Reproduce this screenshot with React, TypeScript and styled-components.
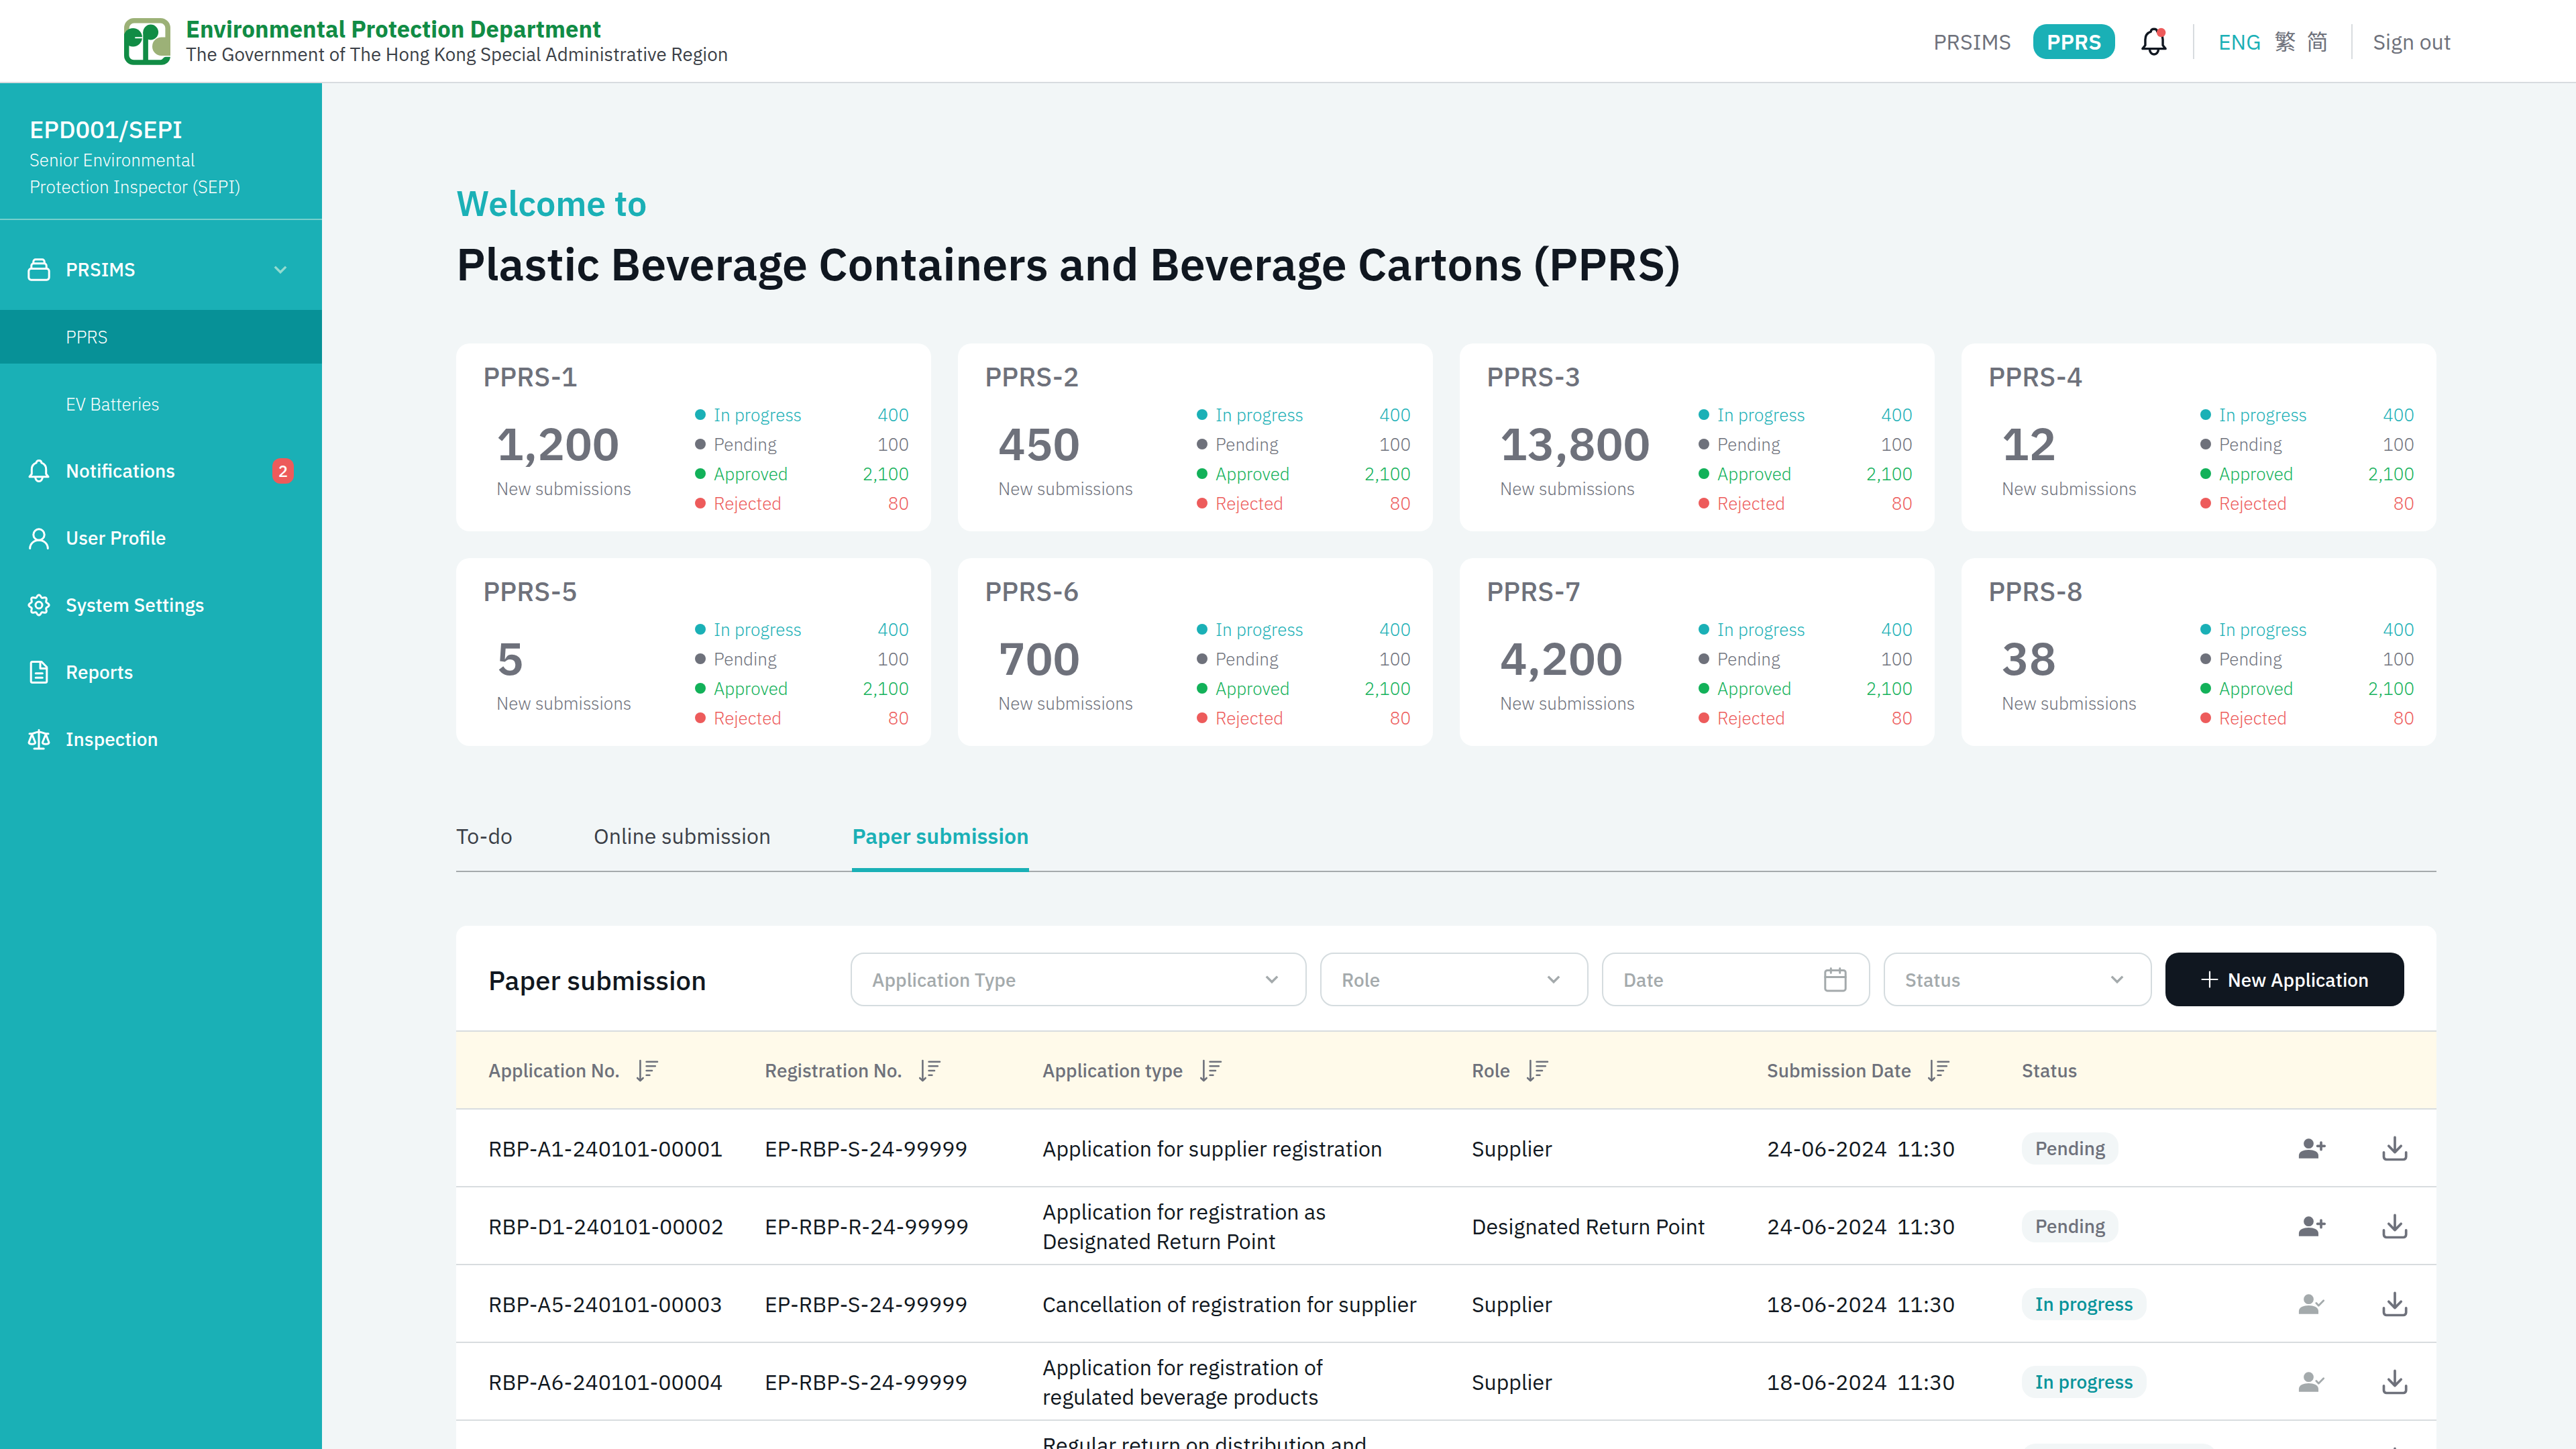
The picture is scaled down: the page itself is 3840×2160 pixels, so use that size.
import React from "react";
import styled, { createGlobalStyle } from "styled-components";

const color = {
  teal: "#1ab0b6",
  tealDark: "#079197",
  tealText: "#06939a",
  ink: "#101720",
  slate: "#3b3f47",
  grey: "#6e717b",
  muted: "#a4aaac",
  line: "#d8dcdf",
  field: "#d5dcdf",
  page: "#f2f6f7",
  cream: "#fffaea",
  green: "#12b159",
  red: "#ed5b5b",
  brand: "#118c45",
  olive: "#9cb177",
};

const GlobalStyle = createGlobalStyle`
  *, *::before, *::after { box-sizing: border-box; }
  body {
    margin: 0;
    background: ${color.page};
    font-family: "IBM Plex Sans", Roboto, "Noto Sans CJK TC", "Noto Sans CJK SC", sans-serif;
    color: ${color.ink};
  }
  h1, h2, h3, p, ul { margin: 0; padding: 0; list-style: none; }
`;

/* ---------- shell ---------- */

const Page = styled.div`
  display: flex;
  flex-direction: column;
  width: 3840px;
  height: 2160px;
  overflow: hidden;
`;

const Header = styled.header`
  flex: none;
  display: flex;
  align-items: center;
  justify-content: space-between;
  height: 124px;
  padding: 0 186px 0 185px;
  background: #fff;
  box-shadow: inset 0 -2px 0 ${color.line};
`;

const Brand = styled.div`
  display: flex;
  align-items: center;
  gap: 23px;
`;

const BrandName = styled.div`
  font-size: 34.6px;
  font-weight: 700;
  line-height: 38px;
  color: ${color.brand};
`;

const BrandSub = styled.div`
  font-size: 27.7px;
  line-height: 36px;
  color: ${color.slate};
`;

const TopNav = styled.nav`
  display: flex;
  align-items: center;
  font-size: 32px;
  line-height: 52px;
  color: ${color.grey};
`;

const Pill = styled.span`
  margin: 0 36px 0 33px;
  padding: 0 20px;
  border-radius: 20px;
  background: ${color.teal};
  color: #fff;
  font-weight: 600;
`;

const Divider = styled.span<{ $before: number; $after: number }>`
  width: 2px;
  height: 52px;
  margin: 0 ${(p) => p.$after}px 0 ${(p) => p.$before}px;
  background: ${color.line};
`;

const Languages = styled.div`
  display: flex;
  gap: 16px;
`;

const Lang = styled.span<{ $active?: boolean; $cjk?: "TC" | "SC" }>`
  color: ${(p) => (p.$active ? color.teal : color.grey)};
  ${(p) => p.$active && "margin-right: 4px;"}
  ${(p) => p.$cjk && `font-family: "Noto Sans CJK ${p.$cjk}", sans-serif; margin-top: -2px;`}
`;

const Body = styled.div`
  flex: 1;
  display: flex;
  min-height: 0;
`;

/* ---------- sidebar ---------- */

const Sidebar = styled.aside`
  flex: none;
  width: 480px;
  background: ${color.teal};
  color: #fff;
`;

const Profile = styled.div`
  height: 204px;
  padding: 44px 44px 0;
  border-bottom: 2px solid #76cfcd;
`;

const ProfileName = styled.div`
  font-size: 36px;
  font-weight: 500;
  line-height: 50px;
`;

const ProfileRole = styled.div`
  width: 340px;
  font-size: 26px;
  font-weight: 300;
  line-height: 40px;
`;

const Nav = styled.nav`
  display: flex;
  flex-direction: column;
  gap: 20px;
  padding-top: 34px;
`;

const NavItem = styled.div`
  display: flex;
  align-items: center;
  gap: 20px;
  height: 80px;
  padding: 0 42px 0 40px;
  font-size: 28px;
  font-weight: 500;
`;

const NavLabel = styled.span`
  flex: 1;
  padding: 0 0 2px 2px;
`;

const SubItem = styled.div<{ $active?: boolean }>`
  height: 80px;
  padding-left: 98px;
  background: ${(p) => (p.$active ? color.tealDark : "transparent")};
  font-size: 26px;
  font-weight: 300;
  line-height: 80px;
`;

const Count = styled.span`
  width: 32px;
  height: 38px;
  border-radius: 12px;
  background: ${color.red};
  font-size: 24px;
  line-height: 38px;
  text-align: center;
`;

/* ---------- main ---------- */

const Main = styled.main`
  width: 3360px;
  padding: 144px 208px 0 200px;
`;

const Welcome = styled.h2`
  font-size: 52px;
  font-weight: 600;
  line-height: 69px;
  color: ${color.teal};
`;

const Title = styled.h1`
  margin-top: 11px;
  font-size: 68px;
  font-weight: 600;
  line-height: 89px;
`;

const Cards = styled.section`
  display: grid;
  grid-template-columns: repeat(4, 708px);
  grid-auto-rows: 280px;
  gap: 40px;
  margin-top: 75px;
`;

const Card = styled.article`
  padding: 23px 33px 0 40px;
  border-radius: 20px;
  background: #fff;
  color: ${color.grey};
`;

const CardTitle = styled.h3`
  font-size: 40px;
  font-weight: 500;
  line-height: 52px;
`;

const CardBody = styled.div`
  display: flex;
  justify-content: space-between;
  margin-top: 9px;
  padding-left: 20px;
`;

const Total = styled.div`
  padding-top: 22px;
  font-size: 68px;
  font-weight: 600;
  line-height: 85px;
`;

const TotalLabel = styled.div`
  margin-top: 5px;
  font-size: 26px;
  font-weight: 300;
  line-height: 40px;
`;

const Stats = styled.ul`
  width: 319px;
`;

const Stat = styled.li<{ $tone: string }>`
  display: flex;
  align-items: center;
  height: 44px;
  font-size: 26px;
  font-weight: 300;
  color: ${(p) => p.$tone};
`;

const Dot = styled.span`
  width: 16px;
  height: 16px;
  margin-right: 12px;
  border-radius: 50%;
  background: currentColor;
`;

const StatValue = styled.span`
  margin-left: auto;
`;

const Tabs = styled.div`
  display: flex;
  margin-top: 112px;
  box-shadow: inset 0 -2px 0 #a5aaac;
`;

const Tab = styled.div<{ $active?: boolean }>`
  margin-right: 121px;
  padding-bottom: 26px;
  border-bottom: 6px solid ${(p) => (p.$active ? color.teal : "transparent")};
  font-size: 32px;
  font-weight: ${(p) => (p.$active ? 600 : 400)};
  line-height: 44px;
  color: ${(p) => (p.$active ? color.teal : color.slate)};
`;

/* ---------- table panel ---------- */

const Panel = styled.section`
  margin-top: 80px;
  border-radius: 16px 16px 0 0;
  background: #fff;
`;

const Toolbar = styled.div`
  display: flex;
  gap: 20px;
  height: 158px;
  padding: 40px 48px 0;
  box-shadow: inset 0 -2px 0 ${color.line};
`;

const PanelTitle = styled.h3`
  width: 520px;
  font-size: 40px;
  font-weight: 500;
  line-height: 82px;
`;

const Select = styled.div<{ $width: number }>`
  display: flex;
  align-items: center;
  justify-content: space-between;
  width: ${(p) => p.$width}px;
  height: 80px;
  padding: 0 30px;
  border: 2px solid ${color.field};
  border-radius: 20px;
  font-size: 28px;
  font-weight: 500;
  line-height: 35px;
  color: ${color.muted};
`;

const NewButton = styled.button`
  display: flex;
  align-items: center;
  justify-content: center;
  gap: 14px;
  width: 356px;
  height: 80px;
  padding: 0;
  border: 0;
  border-radius: 20px;
  background: ${color.ink};
  color: #fff;
  font: inherit;
  font-size: 28px;
  font-weight: 500;
  line-height: 35px;
`;

const Row = styled.div<{ $head?: boolean }>`
  display: grid;
  grid-template-columns: 412px 414px 640px 440px 380px 1fr;
  align-items: center;
  height: 116px;
  padding: 0 40px 0 48px;
  background: ${(p) => (p.$head ? color.cream : "#fff")};
  box-shadow: inset 0 -2px 0 ${color.line};
  font-size: ${(p) => (p.$head ? 28 : 32)}px;
  font-weight: ${(p) => (p.$head ? 500 : 400)};
  line-height: 44px;
  color: ${(p) => (p.$head ? color.grey : color.ink)};
`;

const HeadCell = styled.div`
  display: flex;
  align-items: center;
  gap: 21px;
`;

const Cell = styled.div`
  white-space: pre;
`;

const Badge = styled.span<{ $tone: string; $min?: number }>`
  display: inline-block;
  min-width: ${(p) => p.$min ?? 0}px;
  padding: 0 20px;
  border-radius: 20px;
  background: ${color.page};
  color: ${(p) => p.$tone};
  font-size: 28px;
  font-weight: 500;
  line-height: 48px;
  vertical-align: middle;
`;

const StatusCell = styled.div`
  display: flex;
  align-items: center;
  justify-content: space-between;
`;

const Actions = styled.div`
  display: flex;
  justify-content: flex-end;
  gap: 79px;
`;

/* ---------- icons ---------- */

const Icon = styled.svg<{ $size: number; $stroke?: number }>`
  flex: none;
  display: block;
  width: ${(p) => p.$size}px;
  height: ${(p) => p.$size}px;
  fill: none;
  stroke: currentColor;
  stroke-width: ${(p) => p.$stroke ?? 3};
  stroke-linecap: round;
  stroke-linejoin: round;
  overflow: visible;
`;

const MiterPath = styled.path`
  stroke-linecap: butt;
  stroke-linejoin: miter;
`;

const Logo = () => (
  <svg width="69" height="70" viewBox="0 0 69 70" fill="none">
    <path d="M3.8 24V14.8a11 11 0 0 1 11-11h39.4a11 11 0 0 1 11 11V56" stroke={color.olive} strokeWidth="7.6" />
    <path d="M69 28.6H55.7a13.7 13.7 0 0 0 0 27.4H69z" fill={color.olive} />
    <path
      d="M0 26H7.4V55.2A7 7 0 0 0 14.4 62.2H54.5C57.8 62.2 58.2 58 62 57.8H69C68.2 65 62.8 69.8 55.5 69.8H14A14 14 0 0 1 0 55.8Z"
      fill={color.brand}
    />
    <circle cx="13.3" cy="28.7" r="13.7" fill={color.brand} />
    <path d="M0 26V24L4 18V30Z" fill={color.brand} />
    <path d="M16.3 29.2H28" stroke="#fff" strokeWidth="2" />
    <circle cx="39.7" cy="21" r="11.4" fill={color.brand} />
    <path d="M28.3 21h7.6v46h-7.6z" fill={color.brand} />
  </svg>
);

const BellPaths = () => (
  <>
    <path d="M4 26.7H32L28.7 22.5V15.5C28.7 10.5 26 7.3 21.8 5.8C21.8 3.6 20.2 2.6 18 2.6S14.2 3.6 14.2 5.8C10 7.3 7.3 10.5 7.3 15.5V22.5Z" />
    <path d="M12.7 27.5a5.3 6 0 0 0 10.6 0" />
  </>
);

const AlertBell = () => (
  <Icon $size={44} $stroke={2.8} viewBox="0 0 36 36" color={color.ink}>
    <BellPaths />
    <circle cx="26.7" cy="7" r="5.5" fill={color.red} stroke="none" />
  </Icon>
);

const gearPath =
  Array.from({ length: 144 }, (_, i) => {
    const a = (i / 144) * Math.PI * 2;
    const r = 13.4 + 1.7 * Math.cos(8 * a);
    return `${i ? "L" : "M"}${(18 + r * Math.cos(a)).toFixed(2)} ${(18 + r * Math.sin(a)).toFixed(2)}`;
  }).join("") + "Z";

const navIcons: Record<string, React.ReactNode> = {
  box: (
    <>
      <rect x="2.8" y="16.5" width="30.4" height="16.7" rx="3.6" />
      <path d="M6.8 16V12a3.2 3.2 0 0 1 3.2-3.2H26a3.2 3.2 0 0 1 3.2 3.2V16" />
      <path d="M9.8 8.5V6a3.2 3.2 0 0 1 3.2-3.2H23A3.2 3.2 0 0 1 26.2 6V8.5" />
    </>
  ),
  bell: <BellPaths />,
  user: (
    <>
      <circle cx="18" cy="13" r="8.2" />
      <path d="M4.7 33.5C4.7 26.6 10.5 21.2 18 21.2S31.3 26.6 31.3 33.5" />
    </>
  ),
  gear: (
    <>
      <path d={gearPath} />
      <circle cx="18" cy="18" r="5" />
    </>
  ),
  file: (
    <>
      <path d="M6.2 4.5a2 2 0 0 1 2-2H22L29.8 10.5V31.5a2 2 0 0 1-2 2H8.2a2 2 0 0 1-2-2Z" />
      <path d="M20 2.5V12.5H29.8M13.2 19.7H23.3M13.2 26.3H23.3" />
    </>
  ),
  scale: (
    <>
      <path d="M18 4.2V32M11 32H25.2M4 9.7H7.5C11 9.7 13.5 6.9 18 6.9S25 9.7 28.5 9.7H32" />
      <path d="M7.7 10.5L3 22.8C3 26 12.6 26 12.6 22.8ZM28.3 10.5L23.4 22.8C23.4 26 33 26 33 22.8Z" />
    </>
  ),
};

const Chevron = ({ tint }: { tint?: string }) => (
  <Icon $size={40} $stroke={3.4} viewBox="0 0 40 40" color={tint}>
    <MiterPath d="M11.8 15.6L20 23.8L28.2 15.6" />
  </Icon>
);

const Calendar = () => (
  <Icon $size={40} viewBox="0 0 40 40">
    <rect x="4.8" y="6.4" width="30.4" height="30.6" rx="3.2" />
    <path d="M4.8 16.4H35.2M13.3 3.5V10.2M26.7 3.5V10.2" />
  </Icon>
);

const Plus = () => (
  <Icon $size={26} $stroke={2.2} viewBox="0 0 26 26">
    <path d="M13 1.5V24.5M1.5 13H24.5" />
  </Icon>
);

const Sort = () => (
  <Icon $size={40} $stroke={2.6} viewBox="0 0 40 40">
    <path d="M9.4 5V35M5.2 31L9.4 35.2L13.6 31M18.6 6.8H35M18.6 13.3H31.8M18.6 20H27M18.6 26.7H23.4" />
  </Icon>
);

const Person = () => (
  <>
    <circle cx="16.5" cy="14.7" r="7.4" fill="currentColor" stroke="none" />
    <path d="M1.9 36.7V32.5C1.9 26.8 9 24 16.5 24S31 26.8 31 32.5V36.7Z" fill="currentColor" stroke="none" />
  </>
);

const Assign = () => (
  <Icon $size={44} $stroke={3.7} viewBox="0 0 44 44" color={color.grey}>
    <Person />
    <path d="M29.6 18.3H40.2M35 13V23.7" />
  </Icon>
);

const Assigned = () => (
  <Icon $size={44} $stroke={2.8} viewBox="0 0 44 44" color={color.muted}>
    <Person />
    <path d="M27.8 20.6L31.3 24.2L38.7 16.8" />
  </Icon>
);

const Download = () => (
  <Icon $size={44} $stroke={3.7} viewBox="0 0 44 44" color={color.grey}>
    <path d="M22 5.4V27.6M12.8 18.2L22 27.6L31.2 18.2" />
    <path d="M5.5 27.8V34.5a4 4 0 0 0 4 4H34.7a4 4 0 0 0 4-4V27.8" />
  </Icon>
);

/* ---------- data ---------- */

const cards = [
  ["PPRS-1", "1,200"],
  ["PPRS-2", "450"],
  ["PPRS-3", "13,800"],
  ["PPRS-4", "12"],
  ["PPRS-5", "5"],
  ["PPRS-6", "700"],
  ["PPRS-7", "4,200"],
  ["PPRS-8", "38"],
];

const stats = [
  ["In progress", "400", color.teal],
  ["Pending", "100", color.grey],
  ["Approved", "2,100", color.green],
  ["Rejected", "80", color.red],
];

const columns = ["Application No.", "Registration No.", "Application type", "Role", "Submission Date"];

const rows = [
  { no: "RBP-A1-240101-00001", reg: "EP-RBP-S-24-99999", type: "Application for supplier registration", role: "Supplier", date: "24-06-2024  11:30", status: "Pending" },
  { no: "RBP-D1-240101-00002", reg: "EP-RBP-R-24-99999", type: "Application for registration as\nDesignated Return Point", role: "Designated Return Point", date: "24-06-2024  11:30", status: "Pending" },
  { no: "RBP-A5-240101-00003", reg: "EP-RBP-S-24-99999", type: "Cancellation of registration for supplier", role: "Supplier", date: "18-06-2024  11:30", status: "In progress" },
  { no: "RBP-A6-240101-00004", reg: "EP-RBP-S-24-99999", type: "Application for registration of\nregulated beverage products", role: "Supplier", date: "18-06-2024  11:30", status: "In progress" },
  { no: "", reg: "", type: "Regular return on distribution and\n\u00a0", role: "", date: "", status: "" },
];

const navItems = [
  ["bell", "Notifications"],
  ["user", "User Profile"],
  ["gear", "System Settings"],
  ["file", "Reports"],
  ["scale", "Inspection"],
];

export default function App() {
  return (
    <Page>
      <GlobalStyle />
      <Header>
        <Brand>
          <Logo />
          <div>
            <BrandName>Environmental Protection Department</BrandName>
            <BrandSub>The Government of The Hong Kong Special Administrative Region</BrandSub>
          </div>
        </Brand>
        <TopNav>
          <span>PRSIMS</span>
          <Pill>PPRS</Pill>
          <AlertBell />
          <Divider $before={36} $after={36} />
          <Languages>
            <Lang $active>ENG</Lang>
            <Lang $cjk="TC">繁</Lang>
            <Lang $cjk="SC">简</Lang>
          </Languages>
          <Divider $before={35} $after={30} />
          <span>Sign out</span>
        </TopNav>
      </Header>
      <Body>
        <Sidebar>
          <Profile>
            <ProfileName>EPD001/SEPI</ProfileName>
            <ProfileRole>Senior Environmental Protection Inspector (SEPI)</ProfileRole>
          </Profile>
          <Nav>
            <NavItem>
              <Icon $size={36} viewBox="0 0 36 36">{navIcons.box}</Icon>
              <NavLabel>PRSIMS</NavLabel>
              <Chevron tint="#93dbd0" />
            </NavItem>
            <SubItem $active>PPRS</SubItem>
            <SubItem>EV Batteries</SubItem>
            {navItems.map(([icon, label]) => (
              <NavItem key={label}>
                <Icon $size={36} viewBox="0 0 36 36">{navIcons[icon]}</Icon>
                <NavLabel>{label}</NavLabel>
                {icon === "bell" && <Count>2</Count>}
              </NavItem>
            ))}
          </Nav>
        </Sidebar>
        <Main>
          <Welcome>Welcome to</Welcome>
          <Title>Plastic Beverage Containers and Beverage Cartons (PPRS)</Title>
          <Cards>
            {cards.map(([name, total]) => (
              <Card key={name}>
                <CardTitle>{name}</CardTitle>
                <CardBody>
                  <div>
                    <Total>{total}</Total>
                    <TotalLabel>New submissions</TotalLabel>
                  </div>
                  <Stats>
                    {stats.map(([label, value, tone]) => (
                      <Stat key={label} $tone={tone}>
                        <Dot />
                        {label}
                        <StatValue>{value}</StatValue>
                      </Stat>
                    ))}
                  </Stats>
                </CardBody>
              </Card>
            ))}
          </Cards>
          <Tabs>
            <Tab>To-do</Tab>
            <Tab>Online submission</Tab>
            <Tab $active>Paper submission</Tab>
          </Tabs>
          <Panel>
            <Toolbar>
              <PanelTitle>Paper submission</PanelTitle>
              <Select $width={680}>Application Type<Chevron /></Select>
              <Select $width={400}>Role<Chevron /></Select>
              <Select $width={400}>Date<Calendar /></Select>
              <Select $width={400}>Status<Chevron /></Select>
              <NewButton><Plus />New Application</NewButton>
            </Toolbar>
            <Row $head>
              {columns.map((c) => (
                <HeadCell key={c}>{c}<Sort /></HeadCell>
              ))}
              <HeadCell>Status</HeadCell>
            </Row>
            {rows.map((r, i) => (
              <Row key={i}>
                <Cell>{r.no}</Cell>
                <Cell>{r.reg}</Cell>
                <Cell>{r.type}</Cell>
                <Cell>{r.role}</Cell>
                <Cell>{r.date}</Cell>
                <StatusCell>
                  <Badge $tone={r.status === "Pending" ? color.grey : color.tealText} $min={r.status ? 0 : 290}>
                    {r.status || "\u00a0"}
                  </Badge>
                  <Actions>
                    {r.status === "Pending" ? <Assign /> : <Assigned />}
                    <Download />
                  </Actions>
                </StatusCell>
              </Row>
            ))}
          </Panel>
        </Main>
      </Body>
    </Page>
  );
}
